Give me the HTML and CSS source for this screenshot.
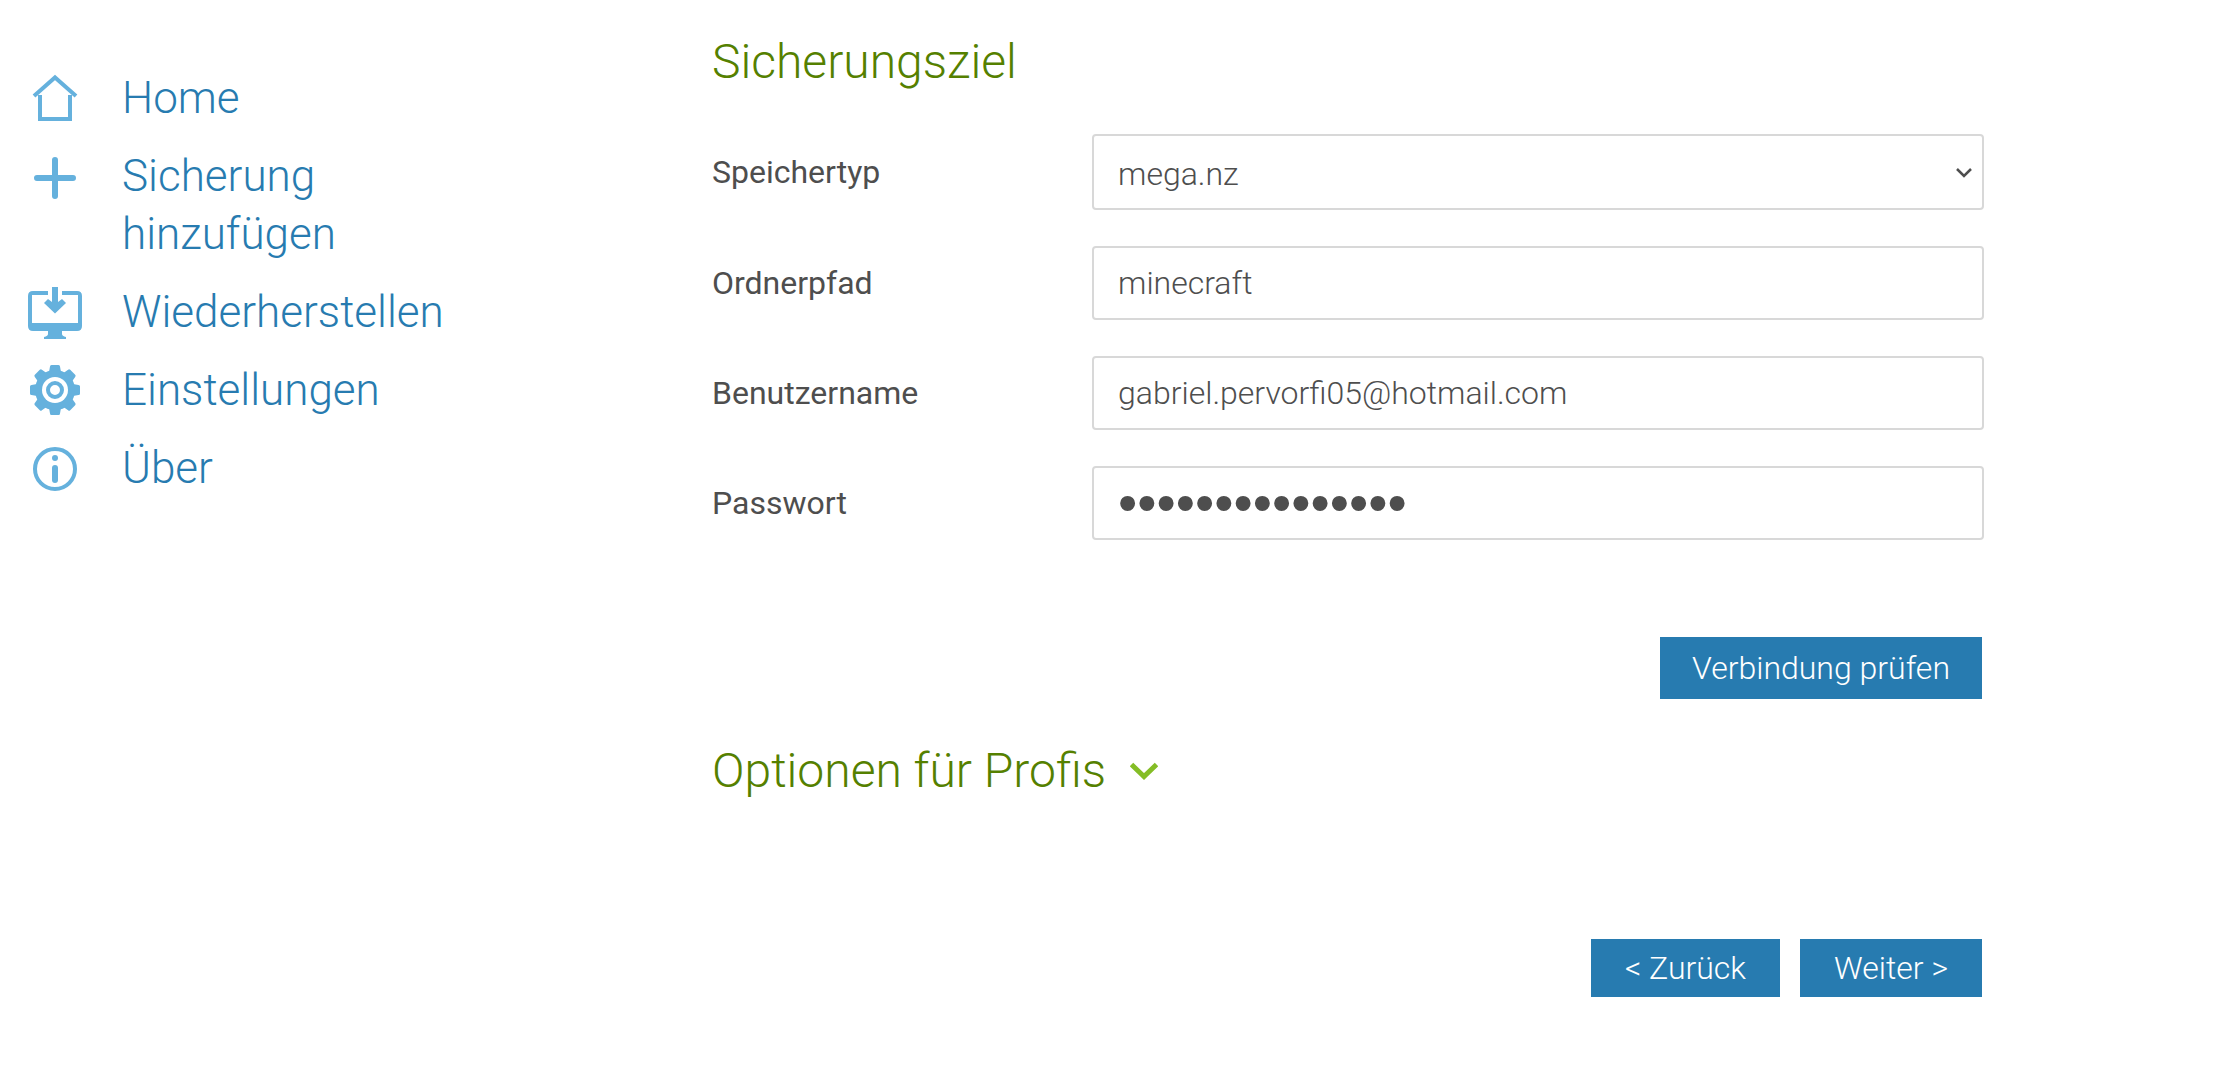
FILE: index.html
```html
<!DOCTYPE html>
<html lang="de">
<head>
<meta charset="utf-8">
<meta name="viewport" content="width=device-width, initial-scale=1">
<title>Sicherungsziel</title>
<link rel="stylesheet" href="styles.css">
</head>
<body>
<div class="page">
  <nav class="menu" aria-label="Hauptmenü">
    <a class="menu-item" href="#home">
      <svg class="menu-icon" viewBox="0 0 54 58" aria-hidden="true"><path d="M6 26 27 7.500 48 26" fill="none" stroke="currentColor" stroke-width="4"/><path d="M12 25v24h30V25" fill="none" stroke="currentColor" stroke-width="4"/></svg>
      <span>Home</span>
    </a>
    <a class="menu-item" href="#add">
      <svg class="menu-icon" viewBox="0 0 54 58" aria-hidden="true"><path d="M27 12v36M9 30h36" stroke="currentColor" stroke-width="6" stroke-linecap="round"/></svg>
      <span>Sicherung hinzufügen</span>
    </a>
    <a class="menu-item" href="#restore">
      <svg class="menu-icon" viewBox="0 0 54 58" aria-hidden="true"><path fill="currentColor" d="M20 7v4H4v28h46V11H34V7h15q5 0 5 5v30q0 5-5 5H34v3q0 2 4 3v2H16v-2q4-1 4-3v-3H5q-5 0-5-5V12q0-5 5-5z"/><path fill="currentColor" d="M24 3h6v15l4-3 4 4-11 10.500L16 19l4-4 4 3z"/></svg>
      <span>Wiederherstellen</span>
    </a>
    <a class="menu-item" href="#settings">
      <svg class="menu-icon" viewBox="0 0 54 58" aria-hidden="true"><g fill="currentColor"><path id="cog" d="M20.500 13 22 4.500q0-1.500 1.500-1.500h7q1.500 0 1.500 1.500l1.500 8.500v30L32 51.500q0 1.500-1.500 1.500h-7q-1.500 0-1.500-1.500L20.500 43z"/><use href="#cog" transform="rotate(45 27 28)"/><use href="#cog" transform="rotate(90 27 28)"/><use href="#cog" transform="rotate(135 27 28)"/></g><circle cx="27" cy="28" r="16.500" fill="none" stroke="currentColor" stroke-width="7"/><circle cx="27" cy="28" r="13" fill="#fff"/><circle cx="27" cy="28" r="7" fill="none" stroke="currentColor" stroke-width="4"/></svg>
      <span>Einstellungen</span>
    </a>
    <a class="menu-item" href="#about">
      <svg class="menu-icon" viewBox="0 0 54 58" aria-hidden="true"><circle cx="27" cy="29" r="20" fill="none" stroke="currentColor" stroke-width="4"/><circle cx="27" cy="18" r="3" fill="currentColor"/><path d="M27 28v12" stroke="currentColor" stroke-width="6" stroke-linecap="round"/></svg>
      <span>Über</span>
    </a>
  </nav>
  <main>
    <form class="target">
      <h2>Sicherungsziel</h2>
      <div class="fields">
        <label for="type">Speichertyp</label>
        <div class="select">
          <select id="type"><option selected>mega.nz</option></select>
          <svg viewBox="0 0 16 10" aria-hidden="true"><path d="M1 1l7 7 7-7" fill="none" stroke="currentColor" stroke-width="2.500"/></svg>
        </div>
        <label for="path">Ordnerpfad</label>
        <input id="path" type="text" value="minecraft">
        <label for="user">Benutzername</label>
        <input id="user" type="text" value="gabriel.pervorfi05@hotmail.com">
        <label for="pass">Passwort</label>
        <input id="pass" type="password" value="passwortpasswor">
      </div>
      <div class="actions"><button class="test" type="button">Verbindung prüfen</button></div>
      <h2 class="advanced"><a href="#advanced">Optionen für Profis
        <svg viewBox="0 0 28 18" aria-hidden="true"><path d="M1.500 2.500 14 14.500 26.500 2.500" fill="none" stroke="currentColor" stroke-width="5"/></svg></a></h2>
      <div class="actions steps">
        <button type="button">&lt; Zurück</button>
        <button type="submit">Weiter &gt;</button>
      </div>
    </form>
  </main>
</div>
</body>
</html>
```
FILE: styles.css
```css
* { box-sizing: border-box; }

body {
  margin: 0;
  background: #fff;
  color: #4e4e4e;
  font-family: Roboto, "Noto Sans", sans-serif;
  font-size: 32px;
  font-weight: 300;
}

a { color: inherit; text-decoration: none; }

.page {
  display: grid;
  grid-template-columns: 712fr 1272fr 232fr;
}

.menu {
  display: flex;
  flex-direction: column;
  gap: 20px;
  width: 480px;
  padding: 69px 28px;
  color: #277bb0;
  font-size: 44px;
  line-height: 58px;
}

.menu-item {
  display: flex;
  align-items: flex-start;
  gap: 40px;
}

.menu-icon {
  flex: none;
  width: 54px;
  height: 58px;
  margin: 1px 0 -1px;
  color: #65b1dd;
}

.target { padding: 30px 0; }

h2 {
  margin: 0;
  color: #558000;
  font-size: 48px;
  font-weight: 300;
  line-height: 64px;
}

.fields {
  display: grid;
  grid-template-columns: 380px 1fr;
  align-items: center;
  row-gap: 36px;
  margin-top: 40px;
}

.fields label { font-weight: 400; }

input,
select {
  width: 100%;
  height: 74px;
  padding: 0 24px;
  border: 2px solid #d8d8d8;
  border-radius: 4px;
  background: #fff;
  color: inherit;
  font: inherit;
}

input[type="password"] {
  font-family: "Liberation Sans", sans-serif;
  font-size: 55px;
}

.select { position: relative; }

select {
  display: block;
  height: 76px;
  padding-top: 4px;
  appearance: none;
}

.select svg {
  position: absolute;
  top: 34px;
  right: 12px;
  width: 16px;
  height: 10px;
  pointer-events: none;
}

.actions {
  display: flex;
  justify-content: flex-end;
  gap: 20px;
  margin-top: 97px;
  padding-right: 2px;
}

button {
  height: 58px;
  padding: 0 34px;
  border: 0;
  background: #277bb0;
  color: #fff;
  font: inherit;
}

.test {
  height: 62px;
  padding: 0 32px;
}

.advanced { margin-top: 40px; }

.advanced a {
  display: inline-flex;
  align-items: center;
  gap: 24px;
}

.advanced svg {
  width: 28px;
  height: 18px;
  color: #84bd26;
}

.steps { margin-top: 136px; }
```
